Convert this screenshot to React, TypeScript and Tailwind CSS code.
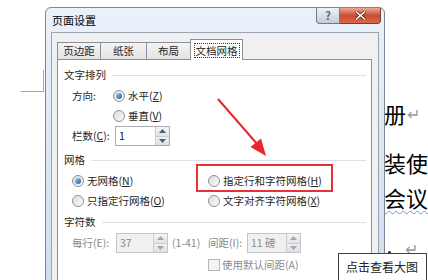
import React from "react";

function Key({ k }: { k: string }) {
  return <span className="underline underline-offset-[1px]">{k}</span>;
}

function Radio({ checked }: { checked?: boolean }) {
  return (
    <span className="flex h-[12px] w-[12px] shrink-0 items-center justify-center rounded-full border border-[#8e9296] bg-linear-to-br from-[#dcdcdc] to-[#fbfbfb]">
      {checked && (
        <span className="h-[6px] w-[6px] rounded-full bg-linear-to-br from-[#9fd0f3] to-[#1c5a9c]" />
      )}
    </span>
  );
}

function Spin({ value, w, disabled }: { value: string; w: string; disabled?: boolean }) {
  const arrow = disabled ? "#9aa6b8" : "#4b5f82";
  return (
    <div
      className={`flex h-[20px] ${w} border ${
        disabled ? "border-[#c2c6ca] bg-[#f0f0f0] text-[#8a8a8a]" : "border-[#abadb3] bg-white text-[#111]"
      }`}
    >
      <span className="flex flex-1 items-center pl-[3px]">{value}</span>
      <div className="flex w-[14px] flex-col border-l border-[#c9ccd0]">
        <span className="flex flex-1 items-center justify-center border-b border-[#c9ccd0] bg-linear-to-b from-[#f5f5f5] to-[#e3e3e3]">
          <svg width="7" height="4" viewBox="0 0 7 4">
            <path d="M0 4 L3.5 0 L7 4 Z" fill={arrow} />
          </svg>
        </span>
        <span className="flex flex-1 items-center justify-center bg-linear-to-b from-[#f0f0f0] to-[#dedede]">
          <svg width="7" height="4" viewBox="0 0 7 4">
            <path d="M0 0 L7 0 L3.5 4 Z" fill={arrow} />
          </svg>
        </span>
      </div>
    </div>
  );
}

function Header({ label, className = "" }: { label: string; className?: string }) {
  return (
    <div className={`flex h-[16px] items-center ${className}`}>
      <span>{label}</span>
      <span className="ml-[6px] h-px flex-1 bg-[#dde2e6]" />
    </div>
  );
}

const TABS = [
  { label: "页边距", w: "w-[43px]" },
  { label: "纸张", w: "w-[46px]" },
  { label: "布局", w: "w-[44px]" },
];

export default function App() {
  return (
    <div className="relative h-[280px] w-[428px] overflow-hidden bg-white font-['Noto_Sans_CJK_SC',sans-serif] text-[#262626]">
      {/* page margin mark */}
      <div className="absolute left-[21px] top-[91px] h-px w-[23px] bg-[#a9a9a9]" />
      <div className="absolute left-[43px] top-[70px] h-[22px] w-px bg-[#a9a9a9]" />

      {/* document text behind dialog */}
      <div className="absolute left-[384px] top-[99px] flex items-center text-[22px] leading-[28px] text-black">
        册<span className="ml-[1px] text-[16px] text-[#9a9a9a]">↵</span>
      </div>
      <div className="absolute left-[384px] top-[148px] text-[22px] leading-[28px] text-black">装使</div>
      <div className="absolute left-[384px] top-[183px] text-[22px] leading-[28px] text-black underline decoration-wavy decoration-[#6f97dd] decoration-[1px] underline-offset-[3px]">
        会议
      </div>
      <div className="absolute left-[405px] top-[236px] text-[16px] text-[#9a9a9a]">↵</div>
      <div className="absolute left-[388px] top-[251px] h-[3px] w-[3px] rounded-full bg-[#222]" />

      {/* dialog window */}
      <div className="absolute left-[45px] top-[7px] flex h-[300px] w-[340px] flex-col rounded-t-[6px] border border-[#7a8696] bg-linear-to-b from-[#eaf1fa] via-[#dbe6f3] to-[#cfdcec]">
        <div className="flex h-[24px] items-start">
          <span className="mt-[5px] pl-[6px] text-[11px] leading-[14px] text-black">页面设置</span>
          <div className="ml-auto mr-[3px] flex h-[16px]">
            <div className="flex w-[24px] items-center justify-center rounded-bl-[4px] border border-t-0 border-[#707c8b] bg-linear-to-b from-[#eef2f7] to-[#c3cedb] text-[11px] font-bold leading-none text-[#5b6470]">
              ?
            </div>
            <div className="flex w-[41px] items-center justify-center rounded-br-[4px] border border-l-0 border-t-0 border-[#7a3b30] bg-linear-to-b from-[#e9a797] via-[#c94b34] to-[#dc6a45]">
              <svg width="11" height="9" viewBox="0 0 11 9">
                <path d="M1.5 1 L9.5 8 M9.5 1 L1.5 8" stroke="#5a2016" strokeWidth="3" strokeLinecap="square" />
                <path d="M1.5 1 L9.5 8 M9.5 1 L1.5 8" stroke="#ffffff" strokeWidth="1.6" strokeLinecap="square" />
              </svg>
            </div>
          </div>
        </div>

        <div className="mx-[5px] flex flex-1 flex-col border border-[#9aa5b3] bg-[#f0f0f0] pl-[5px] pr-[6px] pt-[6px] text-[10.5px] leading-[14px]">
          {/* tabs */}
          <div className="flex h-[20px] items-end">
            {TABS.map((t) => (
              <div
                key={t.label}
                className={`flex h-[17px] ${t.w} items-center justify-center border-l border-t border-[#8c8f96] bg-linear-to-b from-[#f4f4f4] to-[#e3e3e3]`}
              >
                {t.label}
              </div>
            ))}
            <div className="relative z-10 mb-[-1px] flex h-[21px] w-[53px] items-center justify-center border border-b-0 border-[#8c8f96] bg-white">
              <span className="border border-dotted border-[#333] px-[1px] leading-[13px]">文档网格</span>
            </div>
          </div>

          {/* tab page */}
          <div className="flex flex-1 flex-col border border-[#8c8f96] bg-white pl-[6px] pr-[5px] pt-[7px]">
            <Header label="文字排列" />
            <div className="mt-[3px] flex h-[20px] items-center pl-[8px]">
              <span className="w-[41px]">方向:</span>
              <Radio checked />
              <span className="ml-[3px]">
                水平(<Key k="Z" />)
              </span>
            </div>
            <div className="flex h-[20px] items-center pl-[49px]">
              <Radio />
              <span className="ml-[3px]">
                垂直(<Key k="V" />)
              </span>
            </div>
            <div className="flex h-[20px] items-center pl-[8px]">
              <span className="w-[43px]">
                栏数(<Key k="C" />):
              </span>
              <Spin value="1" w="w-[55px]" />
            </div>

            <Header label="网格" className="mt-[6px]" />
            <div className="mt-[3px] flex h-[20px] items-center pl-[8px]">
              <div className="flex w-[136px] items-center">
                <Radio checked />
                <span className="ml-[3px]">
                  无网格(<Key k="N" />)
                </span>
              </div>
              <Radio />
              <span className="ml-[3px]">
                指定行和字符网格(<Key k="H" />)
              </span>
            </div>
            <div className="flex h-[19px] items-center pl-[8px]">
              <div className="flex w-[136px] items-center">
                <Radio />
                <span className="ml-[3px]">
                  只指定行网格(<Key k="O" />)
                </span>
              </div>
              <Radio />
              <span className="ml-[3px]">
                文字对齐字符网格(<Key k="X" />)
              </span>
            </div>

            <Header label="字符数" className="mt-[4px]" />
            <div className="mt-[3px] flex h-[20px] items-center pl-[8px] text-[#8a8a8a]">
              <div className="flex w-[136px] items-center">
                <span className="w-[44px]">每行(E):</span>
                <Spin value="37" w="w-[52px]" disabled />
                <span className="ml-[4px]">(1-41)</span>
              </div>
              <span className="w-[39px]">间距(I):</span>
              <Spin value="11 磅" w="w-[54px]" disabled />
            </div>
            <div className="mt-[2px] flex h-[20px] items-center pl-[144px] text-[#8a8a8a]">
              <span className="h-[12px] w-[12px] border border-[#b4b8bc] bg-[#f4f4f4]" />
              <span className="ml-[2px]">使用默认间距(A)</span>
            </div>
          </div>
        </div>
      </div>

      {/* annotation: red box and arrow */}
      <div className="absolute left-[196px] top-[164px] h-[28px] w-[137px] border-2 border-[#e5323a]" />
      <svg className="absolute left-0 top-0" width="428" height="280" viewBox="0 0 428 280">
        <line x1="218" y1="99" x2="258" y2="145" stroke="#e8262d" strokeWidth="2" />
        <path d="M266 156 L250.5 147 L261 138.5 Z" fill="#e8262d" />
      </svg>

      {/* tooltip */}
      <div className="absolute left-[338px] top-[253px] h-[32px] w-[89px] border border-[#404040] bg-white pl-[7px] pt-[5px] text-[12px] leading-[16px] text-[#222]">
        点击查看大图
      </div>
    </div>
  );
}
